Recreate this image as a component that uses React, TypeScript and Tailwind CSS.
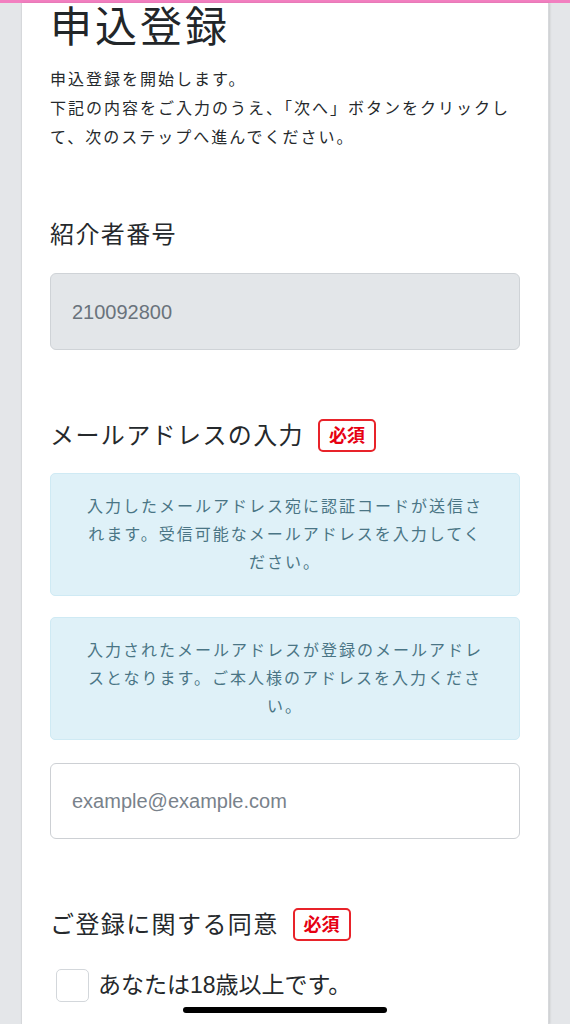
const font = 'font-["Liberation_Sans","Noto_Sans_CJK_JP",sans-serif]';

function RequiredBadge() {
  return (
    <span className="ml-[14px] inline-flex h-[33px] items-center rounded-[5px] border-2 border-[#e8232a] px-[9px] text-[18px] font-bold leading-none text-[#e60012]">
      必須
    </span>
  );
}

function InfoBox({ children }: { children: React.ReactNode }) {
  return (
    <div className="flex h-[123px] items-center justify-center rounded-[5px] border border-[#cfeaf4] bg-[#dff1f8] px-[32px] text-center text-[16px] leading-[28px] tracking-[2px] text-[#4a7585]">
      <p>{children}</p>
    </div>
  );
}

export default function App() {
  return (
    <div className={`relative h-[1024px] overflow-hidden bg-[#e4e6e9] ${font}`}>
      <div className="h-[3px] bg-[#f27fc0]" />
      <div className="mx-[21px] h-[1021px] border-x border-[#d6d8db] bg-white px-[28px] pt-[1px] shadow-[1px_0_2px_rgba(0,0,0,0.12)]">
        <h1 className="text-[42px] font-normal leading-[48px] tracking-[3px] text-[#222629]">申込登録</h1>

        <p className="mt-[13px] text-[16px] leading-[29px] tracking-[2px] text-[#25292c]">
          申込登録を開始します。
          <br />
          下記の内容をご入力のうえ、「次へ」ボタンをクリックして、次のステップへ進んでください。
        </p>

        <h2 className="mt-[67px] text-[24px] font-normal leading-[32px] tracking-[1.4px] text-[#25292c]">紹介者番号</h2>
        <div className="mt-[22px] flex h-[77px] items-center rounded-[6px] border border-[#cfd3d7] bg-[#e3e6e9] px-[21px] text-[20px] text-[#6a737c]">
          210092800
        </div>

        <div className="mt-[69px] flex items-center">
          <h2 className="text-[24px] font-normal leading-[32px] tracking-[1.4px] text-[#25292c]">メールアドレスの入力</h2>
          <RequiredBadge />
        </div>

        <div className="mt-[21px] flex flex-col gap-[21px]">
          <InfoBox>入力したメールアドレス宛に認証コードが送信されます。受信可能なメールアドレスを入力してください。</InfoBox>
          <InfoBox>入力されたメールアドレスが登録のメールアドレスとなります。ご本人様のアドレスを入力ください。</InfoBox>
        </div>

        <input
          type="email"
          placeholder="example@example.com"
          className="mt-[23px] block h-[76px] w-full rounded-[6px] border border-[#cdd0d4] bg-white px-[21px] text-[20px] text-[#25292c] outline-none placeholder:text-[#79828b]"
        />

        <div className="mt-[69px] flex items-center">
          <h2 className="text-[24px] font-normal leading-[32px] tracking-[1.4px] text-[#25292c]">ご登録に関する同意</h2>
          <RequiredBadge />
        </div>

        <label className="mt-[27px] ml-[6px] flex items-center gap-[9px]">
          <span className="block h-[33px] w-[33px] rounded-[5px] border border-[#d3d7db] bg-white" />
          <span className="text-[23px] text-[#25292c]">あなたは18歳以上です。</span>
        </label>
      </div>

      <div className="absolute bottom-[11px] left-[183px] h-[6px] w-[204px] rounded-full bg-black" />
    </div>
  );
}
